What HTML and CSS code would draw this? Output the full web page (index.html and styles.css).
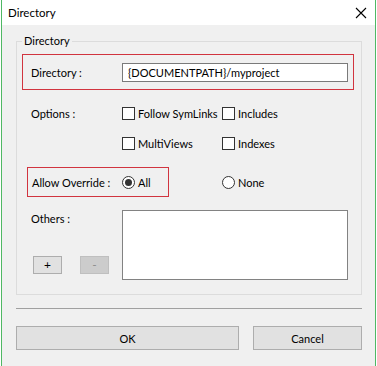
FILE: index.html
```html
<!doctype html>
<html lang="en">
<head>
  <meta charset="UTF-8">
  <title>Directory</title>
  <link rel="stylesheet" href="styles.css">
</head>
<body>
<div class="window">
  <div class="titlebar">
    <span class="title">Directory</span>
    <svg class="close" width="12" height="12" viewBox="0 0 12 12">
      <path d="M1 1 L11 11 M11 1 L1 11" stroke="#000" stroke-width="1.1" fill="none"/>
    </svg>
  </div>
  <div class="client">
    <fieldset class="group">
      <legend>Directory</legend>

      <div class="hl dir-row">
        <span class="lbl">Directory :</span>
        <input class="text" type="text" value="{DOCUMENTPATH}/myproject">
      </div>

      <div class="opt-row">
        <span class="lbl">Options :</span>
        <span class="check"><i class="box"></i>Follow SymLinks</span>
        <span class="check"><i class="box"></i>Includes</span>
      </div>
      <div class="opt-row">
        <span class="lbl"></span>
        <span class="check"><i class="box"></i>MultiViews</span>
        <span class="check"><i class="box"></i>Indexes</span>
      </div>

      <div class="ov-row">
        <div class="hl ov-box">
          <span class="lbl-ov">Allow Override :</span>
          <span class="radio"><i class="dot on"></i>All</span>
        </div>
        <span class="radio none"><i class="dot"></i>None</span>
      </div>

      <div class="others">
        <div class="others-left">
          <span class="lbl">Others :</span>
          <div class="pm">
            <button class="small">+</button>
            <button class="small" disabled>-</button>
          </div>
        </div>
        <textarea class="area"></textarea>
      </div>
    </fieldset>

    <div class="sep"></div>

    <div class="actions">
      <button class="btn ok">OK</button>
      <button class="btn cancel">Cancel</button>
    </div>
  </div>
</div>
</body>
</html>
```

FILE: styles.css
```css
*{
  box-sizing: border-box;
}
body{
  margin: 0;
  background: #fff;
  font-family: Lato, "Liberation Sans", sans-serif;
  font-size: 11px;
  color: #000;
}
.window{
  margin: 0 1px;
  width: 375px;
  height: 366px;
  border-left: 1px solid #4fb864;
  border-right: 1px solid #4fb864;
  display: flex;
  flex-direction: column;
}
.titlebar{
  height: 25px;
  background: #fff;
  display: flex;
  align-items: center;
  justify-content: space-between;
  padding: 0 8px 0 6px;
}
.title{
  font-size: 11.5px;
  line-height: 14px;
}
.close{
  display: block;
}
.client{
  flex: 1;
  background: #f0f0f0;
  padding: 9px 13px 0 14px;
}

/* group box */
.group{
  margin: 0;
  border: 1px solid #dcdcdc;
  padding: 6px 7px 14px 5px;
  min-width: 0;
}
.group legend{
  padding: 0 2px;
  line-height: 14px;
}
.hl{
  border: 1px solid #d1343f;
}
.lbl{
  width: 100px;
  padding-left: 9px;
  flex: none;
}
.dir-row{
  display: flex;
  align-items: center;
  height: 36px;
  padding-right: 5px;
}
.dir-row .lbl{
  width: 99px;
  padding-left: 8px;
}
.text{
  width: 226px;
  height: 19px;
  border: 1px solid #7a7a7a;
  background: #fff;
  font: inherit;
  padding: 0 5px;
  margin: 0;
  outline: none;
}

/* options */
.opt-row{
  display: flex;
  align-items: center;
  height: 30px;
}
.dir-row + .opt-row{
  margin-top: 8px;
}
.check, .radio{
  display: flex;
  align-items: center;
  width: 100px;
  white-space: nowrap;
}
.box{
  width: 13px;
  height: 13px;
  border: 1px solid #333;
  background: #fff;
  margin-right: 3px;
  flex: none;
}

/* override */
.ov-row{
  display: flex;
  align-items: center;
  margin-top: 9px;
}
.ov-box{
  display: flex;
  align-items: center;
  width: 142px;
  height: 30px;
  margin-left: 5px;
}
.lbl-ov{
  width: 94px;
  padding-left: 4px;
  flex: none;
}
.radio{
  width: auto;
}
.none{
  margin-left: 53px;
}
.dot{
  width: 13px;
  height: 13px;
  border: 1px solid #333;
  border-radius: 50%;
  background: #fff;
  margin-right: 3px;
  flex: none;
  display: flex;
  align-items: center;
  justify-content: center;
}
.dot.on::after{
  content: "";
  width: 7px;
  height: 7px;
  border-radius: 50%;
  background: #333;
}

/* others */
.others{
  display: flex;
  margin-top: 13px;
}
.others-left{
  width: 100px;
  display: flex;
  flex-direction: column;
  justify-content: space-between;
  padding-bottom: 6px;
}
.others-left .lbl{
  line-height: 16px;
  margin-top: 1px;
}
.pm{
  display: flex;
  gap: 18px;
  padding-left: 11px;
}
.small{
  width: 29px;
  height: 18px;
  border: 1px solid #adadad;
  background: #e1e1e1;
  font: inherit;
  font-size: 12px;
  line-height: 14px;
  padding: 0;
  color: #000;
}
.small:disabled{
  background: #cccccc;
  border-color: #bfbfbf;
  color: #8d8d8d;
}
.area{
  width: 226px;
  height: 70px;
  border: 1px solid #828282;
  background: #fff;
  resize: none;
  margin: 0;
  font: inherit;
}

/* bottom */
.sep{
  height: 1px;
  background: #a0a0a0;
  margin-top: 13px;
}
.actions{
  display: flex;
  gap: 14px;
  margin-top: 17px;
}
.btn{
  height: 24px;
  border: 1px solid #adadad;
  background: #e1e1e1;
  font: inherit;
  color: #000;
  padding: 0;
}
.ok{
  width: 223px;
}
.cancel{
  width: 109px;
}
```
